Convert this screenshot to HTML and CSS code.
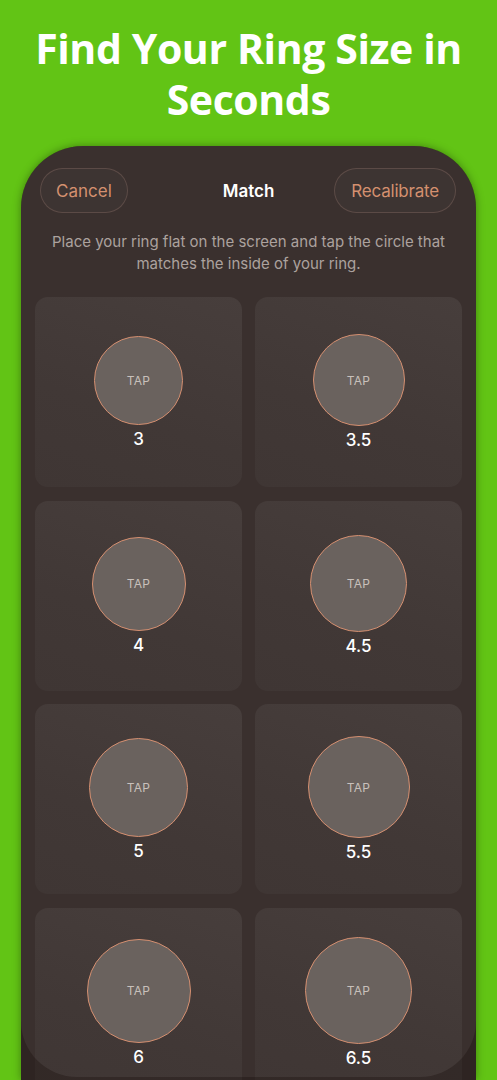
FILE: index.html
```html
<!DOCTYPE html>
<html lang="en">
<head>
<meta charset="utf-8">
<title>Find Your Ring Size in Seconds</title>
<link rel="stylesheet" href="styles.css">
</head>
<body>
<div class="page">
  <h1 class="headline">Find Your Ring Size in<br>Seconds</h1>
  <div class="phone">
    <div class="topbar">
      <button class="pill pill-left">Cancel</button>
      <div class="title">Match</div>
      <button class="pill pill-right">Recalibrate</button>
    </div>
    <p class="hint">Place your ring flat on the screen and tap the circle that matches the inside of your ring.</p>
    <div class="grid">
      <div class="card"><div class="ring" style="width:89px;height:89px"><span class="tap">TAP</span></div><div class="size">3</div></div>
      <div class="card"><div class="ring" style="width:92px;height:92px"><span class="tap">TAP</span></div><div class="size">3.5</div></div>
      <div class="card"><div class="ring" style="width:94px;height:94px"><span class="tap">TAP</span></div><div class="size">4</div></div>
      <div class="card"><div class="ring" style="width:97px;height:97px"><span class="tap">TAP</span></div><div class="size">4.5</div></div>
      <div class="card"><div class="ring" style="width:99px;height:99px"><span class="tap">TAP</span></div><div class="size">5</div></div>
      <div class="card"><div class="ring" style="width:102px;height:102px"><span class="tap">TAP</span></div><div class="size">5.5</div></div>
      <div class="card"><div class="ring" style="width:104px;height:104px"><span class="tap">TAP</span></div><div class="size">6</div></div>
      <div class="card"><div class="ring" style="width:107px;height:107px"><span class="tap">TAP</span></div><div class="size">6.5</div></div>
    </div>
  </div>
</div>
</body>
</html>
```
FILE: styles.css
```css
html, body {
  margin: 0;
  padding: 0;
}
body {
  background: #62c415;
  width: 497px;
  height: 1080px;
  overflow: hidden;
}
.page {
  display: flex;
  flex-direction: column;
  align-items: center;
  height: 1080px;
}
.headline {
  margin: 0;
  padding-top: 23px;
  height: 146px;
  box-sizing: border-box;
  font-family: "Open Sans", "DejaVu Sans", sans-serif;
  font-weight: 700;
  font-size: 41px;
  line-height: 51px;
  color: #ffffff;
  text-align: center;
  letter-spacing: -0.4px;
  flex-shrink: 0;
}
.phone {
  position: relative;
  width: 455px;
  flex: 1;
  background: #3a302e;
  border-radius: 62px 62px 0 0;
  box-shadow: 0 0 9px rgba(0, 0, 0, 0.35);
  overflow: hidden;
  box-sizing: border-box;
  padding: 22px 14px 0 14px;
  font-family: "Inter", "Liberation Sans", sans-serif;
}
.phone::after {
  content: "";
  position: absolute;
  left: 0;
  right: 0;
  top: 0;
  bottom: 3px;
  border-radius: 62px 62px 56px 56px;
  box-shadow: 0 0 0 80px rgba(18, 8, 4, 0.28);
  pointer-events: none;
}
.topbar {
  display: grid;
  grid-template-columns: 1fr auto 1fr;
  align-items: center;
  padding: 0 6px 0 5px;
  height: 45px;
}
.pill {
  height: 45px;
  padding: 0 15px;
  border-radius: 23px;
  border: 1px solid rgba(200, 160, 145, 0.22);
  background: rgba(255, 255, 255, 0.02);
  color: #d4906f;
  font-family: "Inter", "Liberation Sans", sans-serif;
  font-size: 17px;
  font-weight: 400;
}
.pill-left {
  justify-self: start;
}
.pill-right {
  justify-self: end;
  padding: 0 16px;
  letter-spacing: -0.2px;
}
.title {
  color: #ffffff;
  font-size: 17px;
  font-weight: 600;
  padding-left: 1px;
}
.hint {
  margin: 18px 0 22px;
  color: #aca29e;
  font-size: 15px;
  line-height: 22px;
  text-align: center;
}
.grid {
  display: grid;
  grid-template-columns: 1fr 1fr;
  column-gap: 13px;
  row-gap: 13.5px;
}
.card {
  height: 190px;
  border-radius: 13px;
  background: linear-gradient(200deg, #473e3c 0%, #413836 60%, #3f3634 100%);
  display: flex;
  flex-direction: column;
  align-items: center;
  justify-content: center;
  gap: 4px;
}
.ring {
  box-sizing: border-box;
  border-radius: 50%;
  background: #6a625e;
  border: 1.5px solid #d58f70;
  display: flex;
  align-items: center;
  justify-content: center;
}
.tap {
  color: #c8c0bb;
  font-size: 12px;
  letter-spacing: 0.2px;
}
.size {
  color: #ffffff;
  font-size: 17px;
  font-weight: 500;
  line-height: 20px;
}
```
